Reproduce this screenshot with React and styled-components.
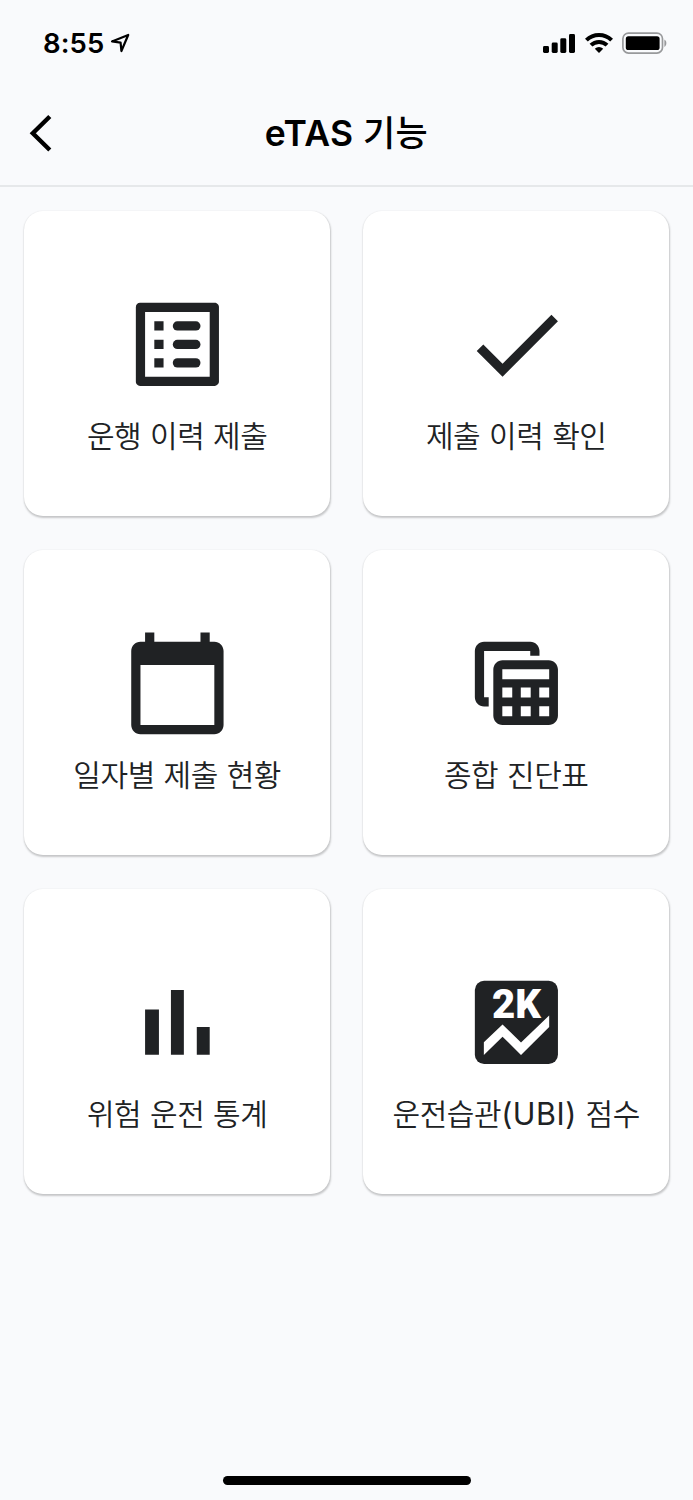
import React from "react";

import styled, { createGlobalStyle } from "styled-components";

const palette = {
  black: "#000000",
  ink: "#202224",
  white: "#ffffff",
  background: "#f9fafc",
  line: "#e6e8ea",
};

const ListIcon = () => (
  <Icon viewBox="0 0 24 24">
    <path d="M19 5v14H5V5h14m1.1-2H3.9c-.5 0-.9.4-.9.9v16.2c0 .4.4.9.9.9h16.2c.4 0 .9-.5.9-.9V3.9c0-.5-.5-.9-.9-.9z" />
    <path d="M7 7h2v2H7zM7 11h2v2H7zM7 15h2v2H7z" />
    <rect x="11" y="7" width="6" height="2" rx="1" />
    <rect x="11" y="11" width="6" height="2" rx="1" />
    <rect x="11" y="15" width="6" height="2" rx="1" />
  </Icon>
);

const CheckIcon = () => (
  <Icon viewBox="0 0 24 24">
    <path d="M9 16.17L4.83 12l-1.42 1.41L9 19 21 7l-1.41-1.41z" />
  </Icon>
);

const CalendarIcon = () => (
  <Icon viewBox="0 0 24 24">
    <path d="M20 3h-1V1h-2v2H7V1H5v2H4c-1.1 0-2 .9-2 2v16c0 1.1.9 2 2 2h16c1.1 0 2-.9 2-2V5c0-1.1-.9-2-2-2zm0 18H4V8h16v13z" />
  </Icon>
);

const CalculatorIcon = () => (
  <Icon viewBox="0 0 24 24">
    <path d="M5 3h10c1.1 0 2 .9 2 2v1h-2V5H5v10h1v2H5c-1.1 0-2-.9-2-2V5c0-1.1.9-2 2-2z" />
    <path
      fillRule="evenodd"
      d="M9 7h10c1.1 0 2 .9 2 2v10c0 1.1-.9 2-2 2H9c-1.1 0-2-.9-2-2V9c0-1.1.9-2 2-2zM8.95 8.95v2.15h10.15V8.95zM8.95 12.9v2.15h2.15V12.9zM12.95 12.9v2.15h2.15V12.9zM16.95 12.9v2.15h2.15V12.9zM8.95 16.95v2.15h2.15v-2.15zM12.95 16.95v2.15h2.15v-2.15zM16.95 16.95v2.15h2.15v-2.15z"
    />
  </Icon>
);

const ChartIcon = () => (
  <Icon viewBox="0 0 24 24">
    <path d="M5 9.2h3V19H5zM10.6 5h2.8v14h-2.8zM16.2 13H19v6h-2.8z" />
  </Icon>
);

const ScoreIcon = () => (
  <Icon viewBox="0 0 24 24">
    <rect x="3" y="3" width="18" height="18" rx="2" />
    <ScoreText x="6.7" y="11.1" textLength="10.6" lengthAdjust="spacingAndGlyphs">
      2K
    </ScoreText>
    <path
      fill={palette.white}
      d="M4.95 16.3L9 12.45l4 3.9 6.1-5.85V13L13 19.05l-4-3.95L4.95 19.05z"
    />
  </Icon>
);

const menus = [
  { label: "운행 이력 제출", icon: ListIcon },
  { label: "제출 이력 확인", icon: CheckIcon },
  { label: "일자별 제출 현황", icon: CalendarIcon },
  { label: "종합 진단표", icon: CalculatorIcon },
  { label: "위험 운전 통계", icon: ChartIcon },
  { label: "운전습관", latin: "(UBI)", rest: " 점수", icon: ScoreIcon },
];

const App = () => {
  return (
    <Container>
      <GlobalStyle />
      <StatusBar>
        <Time>8:55</Time>
        <svg width="20" height="20" viewBox="0 0 20 20">
          <path
            d="M2 8.4L18.2 2 11.4 18 10.6 9.6z"
            fill="none"
            stroke={palette.black}
            strokeWidth="2.2"
            strokeLinejoin="round"
          />
        </svg>
        <StatusIcons>
          <svg width="33" height="22" viewBox="0 0 33 22">
            <rect x="0" y="14" width="6" height="7" rx="1.4" />
            <rect x="8.7" y="10.5" width="6" height="10.5" rx="1.4" />
            <rect x="17.3" y="6.3" width="6" height="14.7" rx="1.4" />
            <rect x="26" y="2" width="6" height="19" rx="1.4" />
          </svg>
          <svg width="28" height="22" viewBox="0 0 28 22">
            <g fill="none" stroke={palette.black} strokeWidth="4">
              <path d="M1.4 8.2a17.8 17.8 0 0 1 25.2 0" />
              <path d="M6 13.2a11.3 11.3 0 0 1 16 0" />
            </g>
            <path d="M14 21l-4.2-4.2a6 6 0 0 1 8.4 0z" />
          </svg>
          <svg width="45" height="22" viewBox="0 0 45 22">
            <rect x="0.9" y="1.1" width="39.6" height="20" rx="5.6" fill="none" stroke="#98999b" strokeWidth="1.7" />
            <rect x="3.8" y="4.2" width="33.8" height="13.8" rx="2.6" />
            <path d="M42.4 7.6c2.6 1.3 2.6 6 0 7.3z" fill="#98999b" />
          </svg>
        </StatusIcons>
      </StatusBar>
      <Header>
        <BackButton aria-label="뒤로">
          <svg width="24" height="38" viewBox="0 0 24 38">
            <path d="M21.8 2.5L4.8 19.3l17 16.7" fill="none" stroke={palette.black} strokeWidth="4.4" />
          </svg>
        </BackButton>
        <Title>
          eTAS <TitleKorean>기능</TitleKorean>
        </Title>
      </Header>
      <Menu>
        {menus.map(({ label, latin, rest, icon: MenuIcon }) => (
          <Card key={label}>
            <MenuIcon />
            <Label>
              {label}
              {latin && <Latin>{latin}</Latin>}
              {rest}
            </Label>
          </Card>
        ))}
      </Menu>
      <HomeIndicator />
    </Container>
  );
};

const GlobalStyle = createGlobalStyle`
  body {
    margin: 0;
    background-color: ${palette.background};
  }
`;

const Container = styled.div`
  display: flex;
  flex-direction: column;
  box-sizing: border-box;
  height: 1500px;
  background-color: ${palette.background};
  font-family: Inter, "Noto Sans CJK KR", sans-serif;
`;

const StatusBar = styled.div`
  display: flex;
  align-items: center;
  box-sizing: border-box;
  height: 81px;
  padding: 4px 26px 0 43px;
`;

const Time = styled.div`
  margin-right: 6px;
  font-size: 27.5px;
  font-weight: 600;
  line-height: 32px;
  letter-spacing: 0.1px;
  color: ${palette.black};
`;

const StatusIcons = styled.div`
  display: flex;
  gap: 9px;
  margin-left: auto;
`;

const Header = styled.div`
  display: grid;
  grid-template-columns: 80px 1fr 80px;
  align-items: center;
  box-sizing: border-box;
  height: 106px;
  border-bottom: 2px solid ${palette.line};
`;

const BackButton = styled.button`
  display: flex;
  padding: 0 0 0 28px;
  border: 0;
  background: none;
`;

const Title = styled.h1`
  margin: 0;
  font-size: 35.5px;
  font-weight: 600;
  line-height: 44px;
  letter-spacing: 0.4px;
  text-align: center;
  color: ${palette.black};
`;

const TitleKorean = styled.span`
  font-size: 35px;
  font-weight: 500;
`;

const Menu = styled.div`
  display: grid;
  grid-template-columns: 1fr 1fr;
  grid-auto-rows: 305px;
  gap: 34px 33.5px;
  padding: 24px 24px 0 24.4px;
`;

const Card = styled.div`
  display: flex;
  flex-direction: column;
  align-items: center;
  box-sizing: border-box;
  padding-top: 77.5px;
  border-radius: 19px;
  background-color: ${palette.white};
  box-shadow: 0.5px 1.5px 2px rgba(0, 0, 0, 0.2), 0 0 2px rgba(0, 0, 0, 0.05);
`;

const Icon = styled.svg`
  flex-shrink: 0;
  width: 110.8px;
  height: 110.8px;
  fill: ${palette.ink};
`;

const ScoreText = styled.text`
  font-family: Roboto, sans-serif;
  font-size: 8.8px;
  font-weight: 900;
  fill: ${palette.white};
`;

const Label = styled.div`
  margin-top: 15px;
  font-size: 30px;
  font-weight: 350;
  line-height: 44px;
  letter-spacing: -0.45px;
  word-spacing: 0.8px;
  white-space: nowrap;
  color: ${palette.ink};
`;

const Latin = styled.span`
  font-size: 30.5px;
  font-weight: 400;
  letter-spacing: 0.5px;
`;

const HomeIndicator = styled.div`
  width: 248px;
  height: 9px;
  margin: auto auto 15px;
  border-radius: 5px;
  background-color: ${palette.black};
`;

export default App;
